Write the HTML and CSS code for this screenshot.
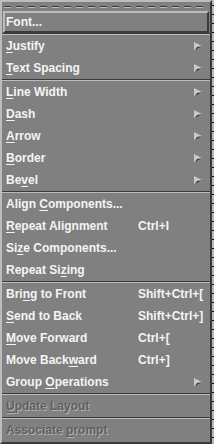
FILE: index.html
```html
<!DOCTYPE html>
<html>
<head>
<meta charset="utf-8">
<link rel="stylesheet" href="styles.css">
</head>
<body>
<div class="screen">
  <div class="menu">
    <div class="tearoff"><div class="dashes"></div></div>
    <div class="item active"><span class="label">Font...</span></div>
    <div class="sep"></div>
    <div class="item"><span class="label"><u>J</u>ustify</span><svg class="arrow" viewBox="0 0 9 9"><polygon points="0,0 8,4 0,8" fill="#c9c9c9"/><polygon points="1,8 8,4 3,5" fill="#3a3a3a"/></svg></div>
    <div class="item"><span class="label"><u>T</u>ext Spacing</span><svg class="arrow" viewBox="0 0 9 9"><polygon points="0,0 8,4 0,8" fill="#c9c9c9"/><polygon points="1,8 8,4 3,5" fill="#3a3a3a"/></svg></div>
    <div class="sep"></div>
    <div class="item"><span class="label"><u>L</u>ine Width</span><svg class="arrow" viewBox="0 0 9 9"><polygon points="0,0 8,4 0,8" fill="#c9c9c9"/><polygon points="1,8 8,4 3,5" fill="#3a3a3a"/></svg></div>
    <div class="item"><span class="label"><u>D</u>ash</span><svg class="arrow" viewBox="0 0 9 9"><polygon points="0,0 8,4 0,8" fill="#c9c9c9"/><polygon points="1,8 8,4 3,5" fill="#3a3a3a"/></svg></div>
    <div class="item"><span class="label"><u>A</u>rrow</span><svg class="arrow" viewBox="0 0 9 9"><polygon points="0,0 8,4 0,8" fill="#c9c9c9"/><polygon points="1,8 8,4 3,5" fill="#3a3a3a"/></svg></div>
    <div class="item"><span class="label"><u>B</u>order</span><svg class="arrow" viewBox="0 0 9 9"><polygon points="0,0 8,4 0,8" fill="#c9c9c9"/><polygon points="1,8 8,4 3,5" fill="#3a3a3a"/></svg></div>
    <div class="item"><span class="label">Be<u>v</u>el</span><svg class="arrow" viewBox="0 0 9 9"><polygon points="0,0 8,4 0,8" fill="#c9c9c9"/><polygon points="1,8 8,4 3,5" fill="#3a3a3a"/></svg></div>
    <div class="sep"></div>
    <div class="item"><span class="label">Align <u>C</u>omponents...</span></div>
    <div class="item"><span class="label"><u>R</u>epeat Alignment</span><span class="accel">Ctrl+I</span></div>
    <div class="item"><span class="label">Si<u>z</u>e Components...</span></div>
    <div class="item"><span class="label">Repeat Si<u>z</u>ing</span></div>
    <div class="sep"></div>
    <div class="item"><span class="label">Bri<u>n</u>g to Front</span><span class="accel">Shift+Ctrl+[</span></div>
    <div class="item"><span class="label"><u>S</u>end to Back</span><span class="accel">Shift+Ctrl+]</span></div>
    <div class="item"><span class="label"><u>M</u>ove Forward</span><span class="accel">Ctrl+[</span></div>
    <div class="item"><span class="label">Move Back<u>w</u>ard</span><span class="accel">Ctrl+]</span></div>
    <div class="item"><span class="label">Group <u>O</u>perations</span><svg class="arrow" viewBox="0 0 9 9"><polygon points="0,0 8,4 0,8" fill="#c9c9c9"/><polygon points="1,8 8,4 3,5" fill="#3a3a3a"/></svg></div>
    <div class="sep"></div>
    <div class="item disabled"><span class="label"><u>U</u>pdate Layout</span></div>
    <div class="sep"></div>
    <div class="item disabled"><span class="label">Associate <u>p</u>rompt</span></div>
  </div>
  <div class="behind"></div>
</div>
</body>
</html>
```
FILE: styles.css
```css
html, body {
  margin: 0;
  padding: 0;
  background: #808080;
}
.screen {
  display: flex;
  width: 214px;
  height: 444px;
  overflow: hidden;
}
.menu {
  width: 208px;
  flex: none;
  background: #808080;
  border-style: solid;
  border-width: 2px;
  border-color: #bcbcbc #3a3a3a #3a3a3a #bcbcbc;
  display: flex;
  flex-direction: column;
  font-family: "Liberation Sans", Arial, sans-serif;
  font-weight: bold;
  font-size: 12px;
  color: #f4f4f4;
}
.behind {
  flex: 1;
  background: repeating-linear-gradient(to bottom, #b8b8b8 0 5px, #111 5px 6px, #b8b8b8 6px 9px);
}
.tearoff {
  height: 9px;
  display: flex;
  align-items: center;
  padding: 0 2px;
}
.dashes {
  height: 2px;
  flex: 1;
  background:
    repeating-linear-gradient(to right, #3a3a3a 0 7px, transparent 7px 12px) top / 100% 1px no-repeat,
    repeating-linear-gradient(to right, #bcbcbc 0 7px, transparent 7px 12px) bottom / 100% 1px no-repeat;
}
.item {
  height: 18px;
  margin: 0 1px;
  border: 2px solid transparent;
  padding-left: 1px;
  display: flex;
  align-items: center;
  position: relative;
  white-space: nowrap;
}
.item.active {
  border-color: #bcbcbc #3a3a3a #3a3a3a #bcbcbc;
}
.label u {
  text-decoration: underline;
  text-decoration-thickness: 1px;
  text-underline-offset: 2px;
}
.accel {
  position: absolute;
  left: 133px;
}
.arrow {
  position: absolute;
  left: 189px;
  top: 5px;
  width: 9px;
  height: 9px;
}
.sep {
  height: 1px;
  background: #3a3a3a;
  border-bottom: 1px solid #bcbcbc;
}
.disabled {
  color: #606060;
  text-shadow: 1px 1px 0 #b4b4b4;
}
```
